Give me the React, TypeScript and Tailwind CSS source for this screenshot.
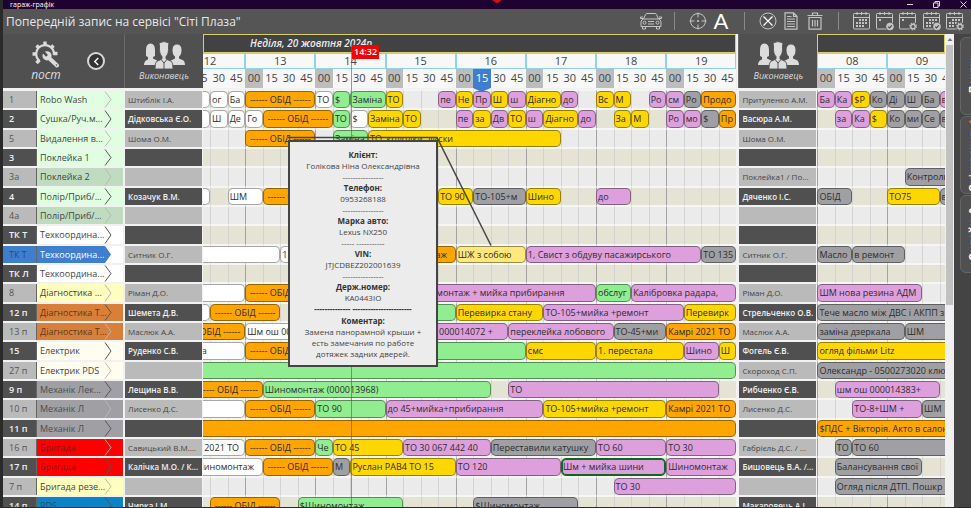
import type { ReactNode } from "react";

type Tone = "white" | "green" | "yellow" | "plum" | "orange" | "gray" | "khaki" | "picked";
type Job = [start: number, end: number, tone: Tone, text: string];
type Row = {
  id: string;
  name: string;
  tint: string;
  worker: string;
  worker2: string;
  jobs: Job[];
  jobs2: Job[];
  active?: boolean;
};

const LUNCH = "------ ОБІД ------";

const TONES: Record<Tone, string> = {
  white: "bg-white border-black/35",
  green: "bg-[#90ee90] border-black/40",
  yellow: "bg-[#ffd700] border-black/40",
  plum: "bg-[#dda0dd] border-black/40",
  orange: "bg-[#ffa500] border-black/40",
  gray: "bg-[#a0a0a4] border-black/40",
  khaki: "bg-[#ffe97c] border-black/40",
  picked: "bg-[#dda0dd] border-[#0b6b1b] ring-1 ring-inset ring-[#0b6b1b]",
};

const MINT = "bg-[#e0ffe0] text-[#444]";
const SAGE = "bg-[#c0dcc0] text-[#444]";
const PLAIN = "bg-white text-[#444]";
const CREAM = "bg-[#ffffc0] text-[#444]";
const COPPER = "bg-[#d8803a] text-[#5a3a20]";
const IVORY = "bg-[#fffdf0] text-[#444]";
const STEEL = "bg-[#a0a0a4] text-[#4c4c4c]";
const RED = "bg-[#ff0000] text-[#8c1616]";
const BLUE = "bg-[#0b84c6] text-[#1d4f73]";

const ROWS: Row[] = [
  {
    id: "1", name: "Robo Wash", tint: MINT, worker: "Штиблік І.А.", worker2: "Притуленко А.М.",
    jobs: [[1, 2, "white", ""], [2, 3, "white", "ог"], [3, 4, "white", "Ба"], [4, 8, "orange", LUNCH], [8, 9, "white", "ТО"], [9, 10, "green", "$"], [10, 12, "green", "Заміна"], [12, 13, "yellow", "ТО"], [15, 16, "plum", "пе"], [16, 17, "yellow", "Не"], [17, 18, "plum", "Пр"], [18, 19, "yellow", "Ш"], [19, 20, "plum", "ш"], [20, 22, "yellow", "Діагно"], [22, 23, "plum", "до"], [24, 25, "yellow", "Вс"], [25, 26, "yellow", "М"], [27, 28, "plum", "Ро"], [28, 29, "plum", "см"], [29, 30, "gray", "Ро"], [30, 32, "orange", "Продо"]],
    jobs2: [[0, 1, "plum", "Ба"], [1, 2, "plum", "Ка"], [2, 3, "yellow", "$Р"], [3, 4, "gray", "Ко"], [4, 5, "gray", "Ді"], [5, 6, "gray", "Ш"], [6, 7, "gray", "Ба"], [7, 8, "plum", "в"]],
  },
  {
    id: "2", name: "Сушка/Руч.м...", tint: MINT, worker: "Дідковська Є.О.", worker2: "Васюра А.М.",
    jobs: [[1, 2, "white", ""], [2, 3, "white", "Ш"], [3, 4, "white", "Де"], [4, 5, "white", "Го"], [5, 9, "orange", LUNCH], [9, 10, "green", "ТО"], [10, 11, "white", "$"], [11, 13, "yellow", "Заміна"], [13, 14, "yellow", "ТО"], [16, 17, "plum", "пе"], [17, 18, "yellow", "за"], [18, 19, "plum", "Дв"], [19, 20, "yellow", "ТО"], [20, 21, "plum", "ш"], [21, 23, "yellow", "Діагно"], [23, 24, "plum", "до"], [25, 26, "yellow", "За"], [26, 27, "yellow", "М"], [28, 29, "plum", "Ро"], [29, 30, "plum", "мо"], [30, 31, "gray", "$"], [31, 32, "orange", "Пр"]],
    jobs2: [[1, 2, "plum", "за"], [2, 3, "plum", "Ка"], [3, 4, "yellow", "$"], [4, 5, "gray", "Ко"], [5, 6, "gray", "ми"], [6, 7, "gray", "Се"], [7, 8, "gray", "в"]],
  },
  {
    id: "5", name: "Видалення в...", tint: MINT, worker: "Шома О.М.", worker2: "Шома О.М.",
    jobs: [[4, 8, "orange", LUNCH], [9, 11, "green", "Заміна"], [11, 22, "yellow", "ТО  колодки, диски"]],
    jobs2: [],
  },
  { id: "3", name: "Поклейка 1", tint: MINT, worker: "", worker2: "", jobs: [], jobs2: [] },
  { id: "3а", name: "Поклейка 2", tint: SAGE, worker: "", worker2: "Поклейка1 / По...", jobs: [], jobs2: [[5, 8, "gray", "Контроль"]] },
  {
    id: "4", name: "Полір/Приб/...", tint: MINT, worker: "Козачук В.М.", worker2: "Дяченко І.С.",
    jobs: [[1, 2, "white", ""], [3, 5, "white", "ШМ"], [5, 9, "orange", LUNCH], [15, 17, "yellow", "ТО 90"], [17, 20, "gray", "ТО-105+м"], [20, 22, "yellow", "Шино"], [24, 26, "plum", "до"]],
    jobs2: [[0, 2, "gray", "ОБІД"], [4, 7, "yellow", "ТО75"], [7, 8, "gray", "в"]],
  },
  { id: "4а", name: "Полір/Приб/...", tint: SAGE, worker: "", worker2: "", jobs: [], jobs2: [] },
  { id: "ТК Т", name: "Техкоордина...", tint: PLAIN, worker: "", worker2: "", jobs: [], jobs2: [] },
  {
    id: "ТК Т", name: "Техкоордина...", tint: PLAIN, worker: "Ситник О.Г.", worker2: "Ситник О.Г.", active: true,
    jobs: [[0, 6, "white", ""], [6, 10, "white", "1"], [12, 16, "orange", "Шиномонтаж"], [16, 20, "khaki", "ШЖ з собою"], [20, 30, "plum", "1, Свист з обдуву пасажирського"], [30, 32, "gray", "ТО 135"]],
    jobs2: [[0, 2, "gray", "Масло"], [2, 5, "gray", "в ремонт"]],
  },
  { id: "ТК Л", name: "Техкоордина...", tint: PLAIN, worker: "", worker2: "", jobs: [], jobs2: [] },
  {
    id: "8", name: "Діагностика ...", tint: CREAM, worker: "Ріман Д.О.", worker2: "Ріман Д.О.",
    jobs: [[0, 4, "white", ""], [4, 8, "orange", LUNCH], [13, 24, "plum", "+Шиномонтаж + мийка прибирання"], [24, 26, "green", "обслуг"], [26, 32, "plum", "Калібровка радара,"]],
    jobs2: [[0, 6, "plum", "ШМ нова резина АДМ"]],
  },
  {
    id: "12 п", name: "Діагностика Т...", tint: COPPER, worker: "Шемета Д.В.", worker2: "Стрельченко О.В.",
    jobs: [[0, 2, "white", ""], [2, 6, "orange", LUNCH], [12, 16, "green", ""], [16, 21, "yellow", "Перевирка стану"], [21, 29, "plum", "ТО-105+мийка +ремонт"], [29, 32, "yellow", "Перевирк"]],
    jobs2: [[0, 8, "gray", "Тече масло між ДВС і АКПП з"]],
  },
  {
    id: "13 п", name: "Діагностика Т...", tint: COPPER, worker: "Маслюк А.А.", worker2: "Маслюк А.А.",
    jobs: [[0, 4, "orange", LUNCH], [4, 8, "white", "Шм ош 0000"], [13, 19, "plum", "Шм ош 000014072 +"], [19, 25, "plum", "переклейка лобового"], [25, 28, "gray", "ТО-45+ми"], [28, 32, "orange", "Камрі 2021 ТО"]],
    jobs2: [[0, 5, "gray", "заміна дзеркала"], [5, 8, "gray", "ШМ"]],
  },
  {
    id: "15", name: "Електрик", tint: IVORY, worker: "Руденко С.В.", worker2: "Фогель Є.В.",
    jobs: [[0, 4, "white", "Заміна"], [4, 8, "orange", LUNCH], [8, 20, "green", ""], [20, 24, "yellow", "смс"], [24, 29, "yellow", "1. перестала"], [29, 31, "plum", "Шино"], [31, 32, "yellow", "Ш"]],
    jobs2: [[0, 8, "yellow", "огляд фільми Litz"]],
  },
  { id: "27 п", name: "Електрик PDS", tint: IVORY, worker: "", worker2: "Скороход С.П.", jobs: [[0, 32, "green", ""]], jobs2: [[0, 8, "gray", "Олександр - 0500273020 ключ"]] },
  {
    id: "9 п", name: "Механік Лек...", tint: STEEL, worker: "Лещина В.В.", worker2: "Рибченко Є.В.",
    jobs: [[1, 5, "orange", LUNCH], [5, 18, "green", "Шиномонтаж (000013968)"], [19, 31, "plum", "ТО"]],
    jobs2: [[1, 7, "plum", "шм ош 000014383+"]],
  },
  {
    id: "10 п", name: "Механік Л", tint: STEEL, worker: "Лисенко Д.С.", worker2: "Лисенко Д.С.",
    jobs: [[0, 4, "white", ""], [4, 8, "orange", LUNCH], [8, 12, "green", "ТО 90"], [12, 21, "plum", "до 45+мийка+прибирання"], [21, 28, "yellow", "ТО-105+мийка +ремонт"], [28, 32, "orange", "Камрі 2021 ТО"]],
    jobs2: [[2, 6, "plum", "ТО-8+ШМ +"], [6, 8, "gray", "ШМ"]],
  },
  { id: "11 п", name: "Механік Л", tint: STEEL, worker: "", worker2: "", jobs: [[0, 32, "orange", ""]], jobs2: [[0, 8, "orange", "$ПДС + Вікторія. Акто в салоні"]] },
  {
    id: "16 п", name: "Бригада", tint: RED, worker: "Савицький В.М....", worker2: "Габрієль Д.С. / ...",
    jobs: [[0, 4, "white", "Камрі 2021 ТО"], [4, 8, "orange", LUNCH], [8, 9, "green", "Че"], [9, 13, "yellow", "ТО 45"], [13, 18, "plum", "ТО 30 067 442 40"], [18, 24, "gray", "Переставили катушку"], [24, 28, "plum", "ТО 60"], [28, 32, "plum", "ТО 30"]],
    jobs2: [[1, 2, "gray", "ТО"], [2, 8, "gray", "ТО 60"]],
  },
  {
    id: "17 п", name: "Бригада", tint: RED, worker: "Калічка М.О. / К...", worker2: "Бишовець В.А. /...",
    jobs: [[1, 5, "white", "Шиномонтаж"], [5, 9, "orange", LUNCH], [9, 10, "gray", "М"], [10, 16, "yellow", "Руслан РАВ4 ТО 15"], [16, 22, "plum", "ТО 120"], [22, 28, "picked", "Шм + мийка шини"], [28, 32, "plum", "Шиномонтаж"]],
    jobs2: [[1, 6, "gray", "Балансування свої"]],
  },
  { id: "7 п", name: "Бригада резе...", tint: CREAM, worker: "", worker2: "", jobs: [[25, 32, "plum", "ТО 30"]], jobs2: [[1, 8, "gray", "Огляд після ДТП. Пошкр"]] },
  {
    id: "14 п", name: "PDS", tint: BLUE, worker: "Чирка І.М.", worker2: "Макаровець А.І.",
    jobs: [[2, 6, "orange", LUNCH], [7, 13, "green", "$Шиномонтаж"], [17, 23, "gray", "$Шиномонтаж"]],
    jobs2: [],
  },
];

const ROW_GRID = "grid auto-rows-[19px_20px_19px] pt-[2px]";
const COLS_LONG = "grid-cols-[repeat(32,minmax(0,1fr))]";
const COLS_SHORT = "grid-cols-[repeat(8,minmax(0,1fr))]";

function IconButton({ label, children }: { label: string; children: ReactNode }) {
  return (
    <button type="button" aria-label={label} className="flex items-center justify-center text-[#c4c4c4]">
      {children}
    </button>
  );
}

function CalendarIcon({ badge, full }: { badge?: "check" | "gear"; full?: boolean }) {
  const dots = full
    ? [[7, 9], [10, 9], [13, 9], [4, 12], [7, 12], [10, 12], [13, 12], [4, 15], [7, 15]]
    : badge
      ? [[4, 9]]
      : [[7, 9], [10, 9], [13, 9], [4, 12], [7, 12], [10, 12], [13, 12], [4, 15], [7, 15], [10, 15]];
  return (
    <svg viewBox="0 0 20 20" className="size-5 shrink-0" fill="none" stroke="currentColor" strokeWidth="1">
      <rect x="1.5" y="2.5" width="16" height="15.5" rx="0.8" />
      <path d="M1.5 6.5h16M5 1v3M9.5 1v3M14 1v3" />
      {dots.map(([x, y]) => (
        <rect key={`${x}-${y}`} x={x} y={y - 1} width="2" height="2" fill="currentColor" stroke="none" />
      ))}
      {badge && <circle cx="15" cy="15.5" r="4.6" fill="#555" stroke="none" />}
      {badge === "check" && (
        <>
          <circle cx="15" cy="15.5" r="3.8" fill="currentColor" stroke="none" />
          <path d="m13.2 15.6 1.3 1.3 2.3-2.6" stroke="#444" strokeWidth="1.1" />
        </>
      )}
      {badge === "gear" && (
        <>
          <circle cx="15" cy="15.5" r="2.2" strokeWidth="1.4" />
          <circle cx="15" cy="15.5" r="3.3" strokeWidth="1.3" strokeDasharray="1.3 1.3" />
        </>
      )}
    </svg>
  );
}

function Divider() {
  return <span className="mx-auto h-[18px] w-px self-center bg-[#8a8a8a]" />;
}

function Toolbar() {
  return (
    <div className="flex h-[25px] shrink-0 items-center justify-between bg-[#555] pr-1 pl-[3px]">
      <h1 className="pt-px text-[12px] leading-5 text-[#e8e8e8]">Попередній запис на сервісі "Сіті Плаза"</h1>
      <div className="grid h-full w-[328px] grid-cols-14 pb-px">
        <IconButton label="Авто">
          <svg viewBox="0 0 24 18" className="h-[18px] w-6 shrink-0" fill="none" stroke="currentColor" strokeWidth="1">
            <path d="M4.5 7 6.5 2.5Q7 1.5 8 1.5h8q1 0 1.5 1L19.500 7M4.500 7h15q2.500.8 2.500 3v4.500H2V10q0-2.200 2.500-3ZM4 5H1.500v1.500H4M20 5h2.500v1.500H20M3.500 14.500V17h3v-2.500M17.500 14.500V17h3v-2.500M9 9.500h6M9 12h6" />
            <circle cx="5.500" cy="10.700" r="1.500" />
            <circle cx="18.500" cy="10.700" r="1.500" />
          </svg>
        </IconButton>
        <Divider />
        <IconButton label="Поточний час">
          <svg viewBox="0 0 18 18" className="size-[18px] shrink-0" fill="none" stroke="currentColor" strokeWidth="1">
            <circle cx="9" cy="9" r="7.500" />
            <path d="M9 .5v5M9 12.500v5M.5 9h5M12.500 9h5" />
            <circle cx="9" cy="9" r="0.700" fill="currentColor" />
          </svg>
        </IconButton>
        <button type="button" className="flex items-center justify-center font-[Lato,sans-serif] text-[22px] leading-none text-white">
          A
        </button>
        <Divider />
        <IconButton label="Скасувати">
          <svg viewBox="0 0 18 18" className="size-[18px] shrink-0" fill="none" stroke="currentColor">
            <circle cx="9" cy="9" r="8" strokeWidth="1" />
            <path d="m4.500 4.500 9 9M13.500 4.500l-9 9" stroke="#fff" strokeWidth="1.300" />
          </svg>
        </IconButton>
        <IconButton label="Документ">
          <svg viewBox="0 0 14 18" className="h-[18px] w-[14px] shrink-0" fill="none" stroke="currentColor" strokeWidth="1.200">
            <path d="M1 .8h8.500L13 4.300v12.900H1ZM9.500.8v3.500H13M3 4.500h4.500M3 7h8M3 9.500h8M3 12h8M3 14.500h8" />
          </svg>
        </IconButton>
        <IconButton label="Видалити">
          <svg viewBox="0 0 16 18" className="h-[18px] w-4 shrink-0" fill="none" stroke="currentColor" strokeWidth="1.200">
            <path d="M.5 3.500h15M5.500 3V1h5v2M2 5.500h12V17.200H2ZM5.500 8v6.500M8 8v6.500M10.500 8v6.500" />
          </svg>
        </IconButton>
        <Divider />
        <IconButton label="Місяць"><CalendarIcon /></IconButton>
        <IconButton label="День підтверджено"><CalendarIcon badge="check" /></IconButton>
        <IconButton label="Налаштування дня"><CalendarIcon badge="gear" /></IconButton>
        <IconButton label="Місяць підтверджено"><CalendarIcon badge="check" full /></IconButton>
        <IconButton label="Налаштування місяця"><CalendarIcon badge="gear" full /></IconButton>
      </div>
    </div>
  );
}

function TitleBar() {
  return (
    <div className="relative flex h-[9px] shrink-0 items-center justify-between bg-[#1f0230] pr-1 pl-[7px] text-white">
      <span className="text-[7px] leading-[9px] font-medium">гараж-графік</span>
      <svg viewBox="0 0 10 4" className="absolute top-0 left-1/2 ml-[5px] h-1 w-[10px]" fill="#d01018">
        <path d="M0 0h10L5 3.500Z" />
      </svg>
      <div className="flex items-center gap-[20px]">
        <button type="button" aria-label="Згорнути" className="h-px w-[6px] bg-[#d8d8d8]" />
        <button type="button" aria-label="Відновити">
          <svg viewBox="0 0 7 7" className="block size-[7px]" fill="none" stroke="#d8d8d8">
            <path d="M.5 2h4.500v4.500H.5ZM2 2V.5h4.500V5H5" />
          </svg>
        </button>
        <button type="button" aria-label="Закрити">
          <svg viewBox="0 0 7 7" className="block size-[7px]" fill="none" stroke="#d8d8d8">
            <path d="m.5.5 6 6M6.500.5l-6 6" />
          </svg>
        </button>
      </div>
    </div>
  );
}

function Chevron({ className }: { className: string }) {
  return (
    <svg viewBox="0 0 8 18" preserveAspectRatio="none" className={`h-full w-2 ${className}`} fill="none" stroke="currentColor" strokeWidth="1">
      <path d="m1 .5 6 8.500-6 8.500" />
    </svg>
  );
}

function PostColumn() {
  return (
    <section className="flex w-[121px] shrink-0 flex-col overflow-hidden">
      <header className="flex h-[54px] shrink-0 items-start bg-[#505050] text-[#dcdcdc]">
        <div className="flex flex-col items-center pt-[6px] pl-[28px]">
          <svg viewBox="0 0 30 28" className="h-7 w-[30px]" fill="none" stroke="currentColor">
            <path d="M8.500 20.800A8.800 8.800 0 1 1 22.800 15" strokeWidth="2.200" />
            <path d="M14 5.500V1.500M8 8 5.500 5.500M20 8l2.500-2.500M5.500 14h-4M8.500 20l-3 3M22.500 13.500h4" strokeWidth="3.400" />
            <path d="m18 18 8 7.500" strokeWidth="4" strokeLinecap="round" />
            <circle cx="16" cy="15.800" r="4.600" fill="currentColor" stroke="none" />
            <path d="m12 11.500 4 4.300" stroke="#505050" strokeWidth="2.600" />
            <circle cx="25.500" cy="25" r="0.800" fill="#505050" stroke="none" />
          </svg>
          <h2 className="text-[12px] leading-[14px] font-medium italic">пост</h2>
        </div>
        <button type="button" aria-label="Назад" className="mt-[18px] ml-[26px] flex size-[18px] items-center justify-center rounded-full border-2 border-[#d8d8d8] bg-[#333]">
          <svg viewBox="0 0 8 10" className="h-[9px] w-[7px]" fill="none" stroke="#fff" strokeWidth="1.600">
            <path d="M6 1 2 5l4 4" />
          </svg>
        </button>
      </header>
      <div className={ROW_GRID}>
        {ROWS.map((row, i) => {
          const dark = i % 2 === 1;
          const numberTone = row.active
            ? "bg-[#3f7ecf] text-[#2b4a78]"
            : dark
              ? "bg-[#505050] font-semibold text-[#f0f0f0]"
              : "bg-[#bababa] text-[#555]";
          return (
            <div key={i} className="flex py-px pr-px">
              <div className={`flex w-[34px] shrink-0 items-center border-r border-[#666] pl-[6px] text-[9px] whitespace-nowrap ${numberTone}`}>
                {row.id}
              </div>
              <div className={`flex min-w-0 flex-1 ${row.tint}`}>
                <span className={`flex w-[67px] shrink-0 items-center pl-[3px] text-[9px] whitespace-nowrap ${row.active ? "bg-[#3f7ecf] text-white" : ""}`}>
                  {row.name}
                </span>
                {row.active ? (
                  <svg viewBox="0 0 8 18" preserveAspectRatio="none" className="h-full w-2" fill="#3f7ecf">
                    <path d="M0 0h1l6 9-6 9H0Z" />
                  </svg>
                ) : (
                  <Chevron className={dark ? "text-[#555]" : "text-[#b8b8b8]"} />
                )}
              </div>
            </div>
          );
        })}
      </div>
    </section>
  );
}

function WorkerColumn({ pick }: { pick: (row: Row) => string }) {
  return (
    <section className="flex w-[79px] shrink-0 flex-col overflow-hidden">
      <header className="flex h-[54px] shrink-0 flex-col items-center border-l border-[#6a6a6a] bg-[#505050] pt-[7px] text-[#dcdcdc]">
        <svg viewBox="0 0 42 29" className="h-[29px] w-[42px]" fill="currentColor">
          <path d="M3 15V9q0-6.500 4.500-6.500T12 9v6l-2 1v1.500l4 2 2.500 4.500H1q0-4.500 4-5.500V16Z" />
          <path d="M29.500 9q0-5.500 4.500-5.500T38.500 9q0 5-2.500 6.500v2l4.500 2q1.500 1 1.500 4.500H26l1-4 5-2.500v-2Q29.500 14 29.500 9Z" />
          <path
            d="M16 2q5-3 10 0l-.5 3q.5 8-2.500 10.500v2.500l5.500 2.500q1.500 1 1.500 7.500H12q0-6.500 1.500-7.500L19 18v-2.500Q16 13 16.500 5Z"
            stroke="#505050"
            strokeWidth="0.900"
          />
          <path d="m18.500 19 2.500 3 2.500-3M21 22v6" stroke="#505050" strokeWidth="1" fill="none" />
        </svg>
        <h2 className="text-[9px] leading-[12px] font-medium italic">Виконавець</h2>
      </header>
      <div className={ROW_GRID}>
        {ROWS.map((row, i) => (
          <div key={i} className="flex px-px py-px">
            <div
              className={`flex min-w-0 flex-1 items-center overflow-hidden pl-[3px] text-[8px] whitespace-nowrap ${
                i % 2 === 1 ? "bg-[#505050] font-semibold text-[#f0f0f0]" : "bg-[#bababa] font-medium text-[#444]"
              }`}
            >
              {pick(row)}
            </div>
          </div>
        ))}
      </div>
    </section>
  );
}

function Timeline({
  hours,
  title,
  pick,
  cols,
  frame,
  canvas,
  current,
}: {
  hours: string[];
  title: string;
  pick: (row: Row) => Job[];
  cols: string;
  frame: string;
  canvas: string;
  current?: number;
}) {
  const slots = hours.flatMap(() => ["00", "15", "30", "45"]);
  return (
    <section className={`flex min-w-0 flex-col overflow-hidden ${frame}`}>
      <h2 className="h-[19px] shrink-0 border border-[#d8cf6a] bg-[#424242] pl-[46px] text-[10px] leading-[17px] font-semibold text-[#ececec] italic">
        {title}
      </h2>
      <div className={`flex shrink-0 flex-col ${canvas}`}>
        <div className={`grid h-4 ${cols}`}>
          {hours.map((hour) => (
            <div key={hour} className="col-span-4 border-x border-y border-[#8fd3ee] bg-[#f8f8f8] text-center text-[11px] leading-[14px] text-[#444]">
              {hour}
            </div>
          ))}
        </div>
        <div className={`grid h-[19px] ${cols}`}>
          {slots.map((slot, i) => (
            <div
              key={i}
              className={`relative flex justify-center text-[11px] leading-[18px] ${
                i === current ? "z-10 bg-[#3f7ecf] text-white" : slot === "00" ? "bg-[#bdbdbd] text-[#444]" : "bg-[#f8f8f8] text-[#444]"
              }`}
            >
              {slot}
              {i === current && (
                <svg viewBox="0 0 18 4" preserveAspectRatio="none" className="absolute top-full left-0 h-1 w-full" fill="#3f7ecf">
                  <path d="M0 0h18L9 4Z" />
                </svg>
              )}
            </div>
          ))}
        </div>
      </div>
      <div className={`${ROW_GRID} ${canvas}`}>
        {ROWS.map((row, r) => (
          <div key={r} className={`grid grid-rows-[minmax(0,1fr)] ${cols}`}>
            {slots.map((_, i) => (
              <span
                key={i}
                style={{ gridColumn: i + 1 }}
                className={`row-start-1 border-l ${i % 4 === 0 ? "border-l-[#a2a2a2]" : "border-l-[#d2d2d0]"} border-y border-y-[#f6f6f4] ${
                  r % 2 === 1 ? "bg-[#e5e4d4]" : "bg-[#ebebeb]"
                }`}
              />
            ))}
            {pick(row).map(([start, end, tone, text]) => (
              <button
                key={start}
                type="button"
                style={{ gridColumn: `${start + 1} / ${end + 1}` }}
                className={`row-start-1 my-px flex min-w-0 items-center overflow-hidden rounded-[5px] border text-[9px] whitespace-pre text-[#2c2c2c] ${
                  text === LUNCH ? "justify-center" : "pl-px"
                } ${TONES[tone]}`}
              >
                {text}
              </button>
            ))}
          </div>
        ))}
      </div>
    </section>
  );
}

const DETAILS: [label: string, value: string, rule: string][] = [
  ["Клієнт:", "Голікова Ніна Олександрівна", "----------------"],
  ["Телефон:", "0953268188", "----------------"],
  ["Марка авто:", "Lexus NX250", "----- -----------"],
  ["VIN:", "JTJCDBEZ202001639", "----------------"],
  ["Держ.номер:", "KA0443IO", "-------------- -----------------------"],
];

function DetailsPopup() {
  return (
    <aside className="absolute top-[106px] left-[285px] z-20 w-[150px] border-2 border-[#444] bg-[#ececec] pt-[7px] pb-[6px] text-center text-[8px] leading-[11px] text-[#444]">
      {DETAILS.map(([label, value, rule], i) => (
        <div key={label} className="whitespace-nowrap">
          <p className="font-bold text-[#333]">{label}</p>
          <p>{value}</p>
          <p className={i === DETAILS.length - 1 ? "font-bold text-[#333]" : ""}>{rule}</p>
        </div>
      ))}
      <p className="mt-px font-bold text-[#333]">Коментар:</p>
      <p className="px-2">Замена панорамной крыши + есть замечания по работе дотяжек задних дверей.</p>
    </aside>
  );
}

function SideTab({ label, count, hot }: { label: string; count?: string; hot?: boolean }) {
  return (
    <button
      type="button"
      className="flex h-[78px] w-6 shrink-0 items-center justify-center rounded-l-[6px] border border-[#666] bg-[#505050] pl-px"
    >
      <span className="flex rotate-180 gap-[6px] text-[10px] leading-3 font-bold whitespace-nowrap text-white [writing-mode:vertical-rl]">
        {label}
        {count && <span className={hot ? "text-[#e8763a]" : ""}>{count}</span>}
      </span>
    </button>
  );
}

export default function App() {
  return (
    <div className="flex h-screen flex-col overflow-hidden border-b border-l-[3px] border-[#2a2a2a] bg-[#f2f2f2] font-['Open_Sans','Noto_Sans',sans-serif]">
      <TitleBar />
      <Toolbar />
      <main className="relative flex min-h-0 flex-1">
        <PostColumn />
        <WorkerColumn pick={(row) => row.worker} />
        <Timeline
          hours={["12", "13", "14", "15", "16", "17", "18", "19"]}
          title="Неділя, 20 жовтня 2024р"
          pick={(row) => row.jobs}
          cols={COLS_LONG}
          frame="flex-[535_1_0%] pr-[2px]"
          canvas="w-[calc(100%+28px)] self-end"
          current={17}
        />
        <WorkerColumn pick={(row) => row.worker2} />
        <Timeline
          hours={["08", "09"]}
          title=""
          pick={(row) => row.jobs2}
          cols={COLS_SHORT}
          frame="flex-[128_1_0%]"
          canvas="w-[calc(100%+12px)] self-start"
        />
        <div className="flex w-[9px] shrink-0 flex-col items-center bg-[#f0f0f0]">
          <svg viewBox="0 0 8 11" className="h-[11px] w-2" fill="#777">
            <path d="m4 4 2.500 3h-5Z" />
          </svg>
          <div className="h-[260px] w-[7px] bg-[#c1c1c1]" />
        </div>
        <nav className="flex w-[17px] shrink-0 flex-col gap-px overflow-hidden bg-[#444] pt-[3px] pl-[6px]">
          <SideTab label="Пошук" />
          <SideTab label="Очікування" count="1" hot />
          <SideTab label="Онлайн" count="0" />
        </nav>

        <div className="absolute top-[11px] bottom-0 left-[348px] z-10 w-px bg-[#e02020]/60" />
        <time className="absolute top-[11px] left-[349px] z-10 bg-[#f80000] px-[2px] text-[9px] leading-[14px] font-semibold text-white">14:32</time>
        <DetailsPopup />
        <svg viewBox="0 0 210 112" className="pointer-events-none absolute top-[102px] left-[285px] z-30 h-28 w-[210px]" fill="none" stroke="#444" strokeWidth="1.500">
          <path d="M0 1.500h149l54 108" />
        </svg>
      </main>
    </div>
  );
}
